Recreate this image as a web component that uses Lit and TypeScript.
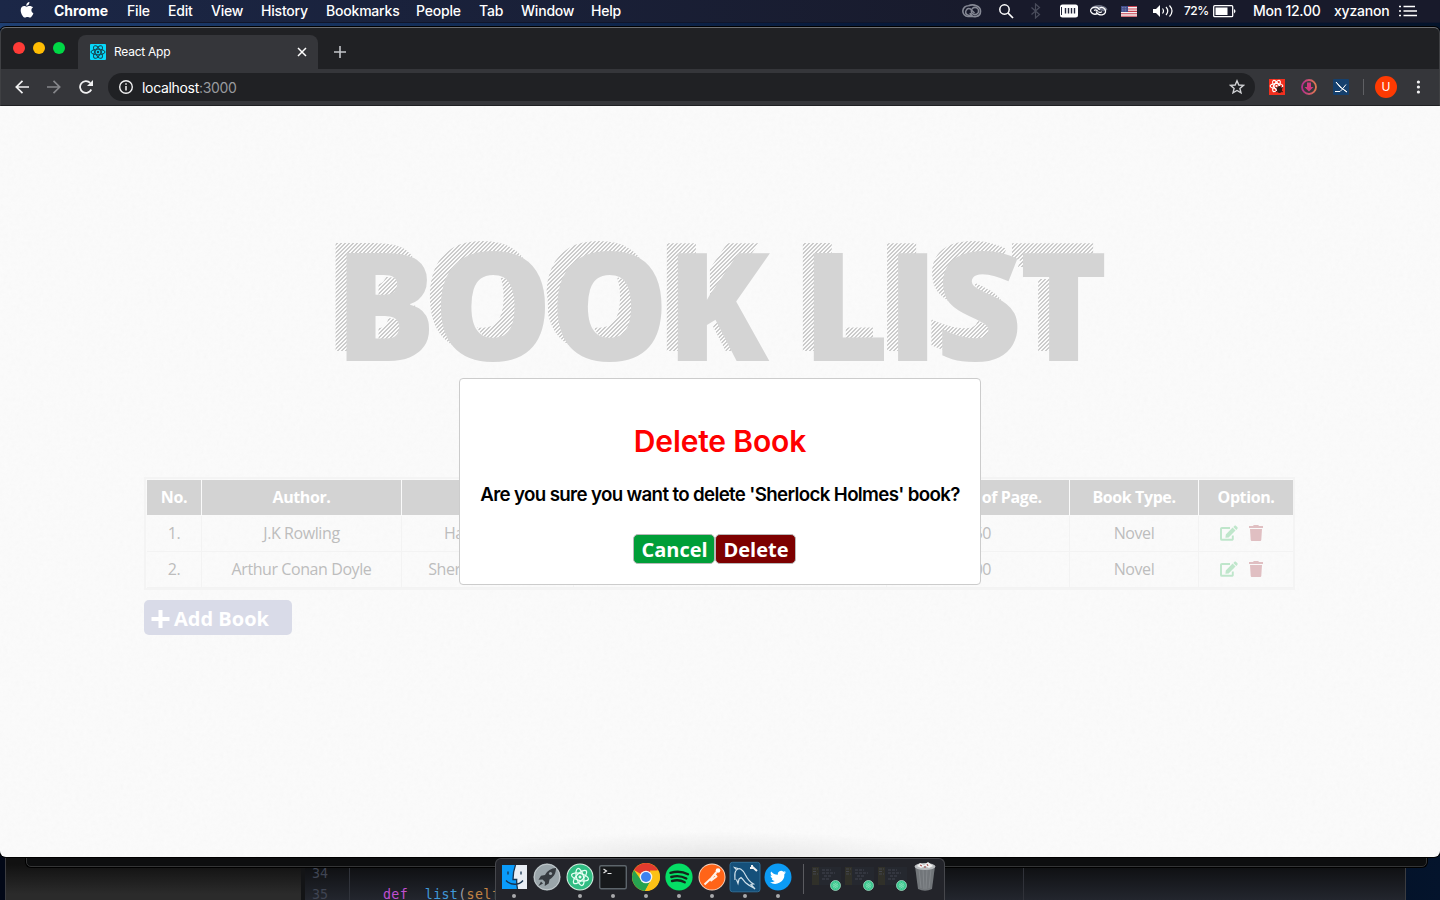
import { LitElement, html, css, svg } from "lit";
import { customElement } from "lit/decorators.js";

const menus = ["Chrome", "File", "Edit", "View", "History", "Bookmarks", "People", "Tab", "Window", "Help"];

const rows = [
  { no: "1.", author: "J.K Rowling", title: "Harry Potter", pages: "350", type: "Novel" },
  { no: "2.", author: "Arthur Conan Doyle", title: "Sherlock Holmes", pages: "300", type: "Novel" },
];

const icon = (w: number, h: number, body: unknown, vb = `0 0 ${w} ${h}`) =>
  html`<svg class="ic" width=${w} height=${h} viewBox=${vb} fill="none">${body}</svg>`;

const atom = (stroke: string, w: number) => svg`
  <g stroke=${stroke} stroke-width=${w} fill="none">
    <ellipse rx="7" ry="2.8"/><ellipse rx="7" ry="2.8" transform="rotate(60)"/><ellipse rx="7" ry="2.8" transform="rotate(120)"/>
  </g><circle r="1.2" fill=${stroke}/>`;

const apple = icon(14, 16, svg`<path fill="#fff" d="M9.4 0c.1 1.1-.3 2-.9 2.700-.6.7-1.500 1.100-2.300 1.100-.1-1 .4-2 .9-2.600C7.700.5 8.700.1 9.400 0zM13 5.500c-1 .6-1.600 1.500-1.600 2.700 0 1.400.8 2.500 2 3-.3 1-.8 1.900-1.400 2.700-.6.8-1.200 1.700-2.200 1.700-.9 0-1.200-.6-2.400-.6-1.100 0-1.500.6-2.400.6S3.400 14.800 2.700 13.900C1.500 12.300.7 10.200.7 8.200.7 5.500 2.400 4.100 4.100 4.100c1 0 1.900.7 2.600.7s1.700-.8 3-.7c1.200 0 2.500.6 3.300 1.400z"/>`);

const edit = icon(18, 16, svg`<path fill="#bfe6cb" d="M12.600 2.600l2.900 2.900-6.900 6.900-3.200.4.400-3.200zM13.300 1.900l1-1c.6-.6 1.300-.6 1.800 0l1.200 1.200c.5.5.5 1.200 0 1.800l-1 1z"/><path d="M10 3H1.900a.9.900 0 0 0-.9.900v10a.9.900 0 0 0 .9.900h10a.9.900 0 0 0 .9-.9V10.500" stroke="#bfe6cb" stroke-width="1.900"/>`);
const trash = icon(14, 16, svg`<path fill="#e0bfc2" d="M0 1h4l.8-1h4.400l.8 1h4v1.900H0zM1 4h12l-.7 10.700c0 .7-.6 1.300-1.400 1.300H3.100c-.8 0-1.400-.6-1.400-1.300z"/>`);

const dockApps = [
  // file manager face
  svg`<rect x="2" y="2" width="25" height="24" fill="#0a9bfa"/><path fill="#e9eef5" d="M15.500 2H27v24H17.500c-.6-3-1-6-.8-9.500h-3.700C13 11 14 6 15.500 2z"/><path d="M15.500 2c-1.500 4-2.500 9-2.500 14.500h3.700c-.2 3.500.2 6.500.8 9.500M8 8.500v3M21 8.500v3M6 17.500c4.500 5 13 5 17 0" stroke="#173451" stroke-width="1.300"/>`,
  // launcher
  svg`<circle cx="14" cy="14" r="13.500" fill="#9aa5aa"/><circle cx="14" cy="14" r="12.800" stroke="#c1c8cb"/><path fill="#363b40" d="M23 5c-5 .3-8.500 2.500-11 7l-4 .8-2.500 4 4-.4 2.600 2.600-.4 4 4-2.500.8-4C21 14 23 10 23 5zM8 18.500L5.500 23l4.500-2.500z"/><circle cx="17.500" cy="10.500" r="1.600" fill="#9aa5aa"/>`,
  // atom editor
  svg`<circle cx="14" cy="14" r="13.500" fill="#d9efe3"/><circle cx="14" cy="14" r="12.500" fill="#31bd83"/><g transform="translate(14 14) rotate(15) scale(1.250)">${atom("#e8fff4", 1)}</g>`,
  // terminal
  svg`<rect x=".7" y="2.700" width="26.600" height="23" rx="1.500" fill="#17191b" stroke="#5d656b" stroke-width="1.400"/><path d="M4.500 6l3 2-3 2M8.500 10.500h4" stroke="#e8e8e8" stroke-width="1.200"/>`,
  // chrome
  svg`<circle cx="14" cy="14" r="14" fill="#fbc116"/><path fill="#e33b2e" d="M14 14L1.900 7A14 14 0 0 1 26.100 7z"/><path fill="#27a350" d="M1.900 7A14 14 0 0 0 13 28l6-11-5-3-6 1.500z"/><path fill="#fbc116" d="M26.100 7.500A14 14 0 0 1 13 28l6-11-1-9.500z"/><circle cx="14" cy="14" r="6.300" fill="#f4f4f4"/><circle cx="14" cy="14" r="5" fill="#3c82f0"/>`,
  // spotify
  svg`<circle cx="14" cy="14" r="13.600" fill="#05de65"/><path d="M5.500 9.800c6-1.800 12.500-1.200 17.500 1.500M6.300 14c5-1.500 10.500-1 15 1.500M7 18c4.500-1.200 9-.8 12.700 1.300" stroke="#14251b" stroke-width="2.400" stroke-linecap="round"/>`,
  // postman
  svg`<circle cx="14" cy="14" r="13.500" fill="#f9d9c6"/><circle cx="14" cy="14" r="12.600" fill="#ff6418"/><circle cx="20" cy="7.500" r="2.300" fill="#fff"/><path d="M18.500 9l-5 6-7 6.500M17 11.500l1.500 2-6 4.500" stroke="#fff0e5" stroke-width="2" stroke-linejoin="round"/>`,
  // workbench
  svg`<rect x="-1" y="-.7" width="30" height="29.500" rx="2.500" fill="#15507a" stroke="#2f6d96"/><path d="M4 17c0-4-1-7 1-9.500 3-4 7-1 9.500 4.500 2 4 4.500 7 8 9l-2.500.5 4 4.500c-3-2-6-3.500-9-6-2-2-3-4-5-5.500l-2 1.500-1 4.500-1.500-4M5 6.500L3.500 4.500 7 5.500" stroke="#cfe0ea" stroke-width="1.200"/><path d="M21 3.500l5 4.500M21 2v3h-2" stroke="#f3f3f3" stroke-width="2"/>`,
  // twitter
  svg`<circle cx="14" cy="14" r="13.500" fill="#0c9bf4"/><path fill="#fff" d="M22 9.300c-.6.300-1.200.4-1.900.5.700-.4 1.200-1 1.400-1.800-.6.400-1.300.6-2.100.8a3.300 3.300 0 0 0-5.600 3c-2.700-.1-5.100-1.400-6.700-3.400-.9 1.500-.4 3.400 1 4.400-.5 0-1-.2-1.500-.4 0 1.600 1.100 2.900 2.600 3.200-.5.100-1 .1-1.500.1.400 1.300 1.600 2.200 3.100 2.300A6.600 6.600 0 0 1 6 19.300a9.300 9.300 0 0 0 14.400-8.300c.6-.5 1.200-1 1.600-1.700z"/>`,
];

@customElement("menu-bar")
export class MenuBar extends LitElement {
  static styles = css`
    :host { display: flex; justify-content: space-between; height: 23px; background: linear-gradient(90deg, #1b2747, #181a2b 70%); color: #fff; font: 500 14px/22px Inter, sans-serif; border-bottom: 1px solid #11162b; box-sizing: border-box; white-space: nowrap; }
    .left { display: grid; grid-template-columns: 34px 73px 41px 43px 50px 65px 90px 63px 42px 70px 40px; padding-left: 20px; letter-spacing: -.2px; }
    .brand { font-weight: 700; letter-spacing: -.02px; }
    .right { display: grid; grid-template-columns: 36px 31px 31px 29px 32px 31px 32px 29px 40px 81px 65px 41px; align-items: center; letter-spacing: -.25px; }
    .pct { font-size: 12px; letter-spacing: -.5px; }
    .user { letter-spacing: -.2px; }
    .ic { display: block; }
    .left .ic { margin-top: 2px; }
  `;
  render() {
    return html`
      <div class="left">${apple}${menus.map((m, i) => html`<span class=${i ? "" : "brand"}>${m}</span>`)}</div>
      <div class="right">
        ${icon(20, 14, svg`<path d="M6.500 1.700A5.400 5.400 0 0 0 6 12.500h8M6.500 1.700c5-2 12 .3 12 5.300a5.400 5.400 0 0 1-10.500 2" stroke="#858894" stroke-width="1.600"/><circle cx="13" cy="7" r="3.600" stroke="#858894" stroke-width="1.600"/><path d="M10 9.500A3.300 3.300 0 1 1 8.500 5l4 4" stroke="#858894" stroke-width="1.500"/>`)}
        ${icon(16, 16, svg`<circle cx="6.500" cy="6.500" r="4.700" stroke="#fff" stroke-width="1.500"/><path d="M10 10l5 5" stroke="#fff" stroke-width="1.700"/>`)}
        ${icon(12, 16, svg`<path d="M2.500 4.500l8 7-4 3.500V1l4 3.500-8 7" stroke="#4a4d5c" stroke-width="1.200"/>`)}
        ${icon(18, 14, svg`<rect y=".5" width="18" height="13" rx="2.500" fill="#fff"/><path d="M5.500 4v5.500M8.500 4v5.500M11.500 4v5.500M14.500 4v5.500" stroke="#22263b" stroke-width="1.400"/><path d="M1.500 3v8" stroke="#22263b"/>`)}
        ${icon(19, 14, svg`<path d="M2 3.500C6-.5 16 0 18.500 5.500l-3.500 2z" fill="#6b6f80"/><path d="M10.500 6.200C9.800 3.500 6.500 2.500 4 3.600S.8 7 2.600 8.800s4.600 1.500 6.200.6M7.200 7.300c.6 2.800 3.800 4.300 6.600 3.300s3.600-3.600 1.900-5.600-4-1.700-5.200-1.100M5 6.500c1.500-1 3-.6 3.700.9M13 7.600c-1.200 1.200-2.700 1-3.700 0" stroke="#fff" stroke-width="1.300"/>`)}
        ${icon(16, 11, svg`<rect width="16" height="11" fill="#f4f0f2"/><path d="M0 .5h16M0 3h16M0 5.400h16M0 7.800h16M0 10.300h16" stroke="#c64050" stroke-width="1.100"/><rect width="7" height="6" fill="#404b88"/><path d="M1 1.500h5M1 3.200h5M1 4.900h5" stroke="#b9bfdc" stroke-width=".6" stroke-dasharray=".7 .9"/>`)}
        ${icon(22, 14, svg`<path fill="#fff" d="M1 5h3l4-4v12L4 9H1z"/><path d="M10.500 4.500q2 2.500 0 5M14 3q3.500 4 0 8M17.500 1.500q5 5.500 0 11" stroke="#fff" stroke-width="1.200"/>`)}
        <span class="pct">72%</span>
        ${icon(24, 13, svg`<rect x=".7" y=".7" width="19" height="11" rx="1" stroke="#fff" stroke-width="1.300"/><rect x="2.500" y="2.500" width="12" height="7.500" fill="#fff"/><path fill="#fff" d="M21 4q3 2.200 0 4.400z"/>`)}
        <span>Mon 12.00</span><span class="user">xyzanon</span>
        ${icon(18, 12, svg`<path d="M4.500 1.500H16M4.500 6H18M4.500 10.500H18" stroke="#fff" stroke-width="1.700"/><path d="M0 1.500h2M0 6h2M0 10.500h2" stroke="#fff" stroke-width="1.700"/>`)}
      </div>`;
  }
}

@customElement("browser-chrome")
export class BrowserChrome extends LitElement {
  static styles = css`
    :host { display: block; height: 79px; box-sizing: border-box; border: 1px solid #6d6f72; border-bottom: 1px solid #1f2023; border-left-color: #3f4043; border-right-color: #3f4043; border-radius: 6px 6px 0 0; background: #202124; color: #fff; font-family: Inter, sans-serif; overflow: hidden; }
    .tabs { display: flex; height: 41px; align-items: flex-end; }
    .lights { display: flex; gap: 8px; padding: 0 13px 15px 12px; }
    .dot { width: 12px; height: 12px; border-radius: 50%; }
    .r { background: #ff3b37; } .y { background: #ffbd03; } .g { background: #00d846; }
    .tab { display: flex; align-items: center; width: 240px; height: 34px; padding: 0 10px 1px 12px; box-sizing: border-box; border-radius: 8px 8px 0 0; background: #35363a; font: 12px Inter, sans-serif; letter-spacing: -.25px; }
    .name { flex: 1; padding-left: 8px; }
    .ic { display: block; flex: none; }
    .plus { padding: 0 0 11px 16px; }
    .bar { display: flex; align-items: center; height: 36px; background: #35363a; padding: 0 14px; box-sizing: border-box; }
    .nav { display: flex; gap: 18px; padding-right: 15px; }
    .omni { display: flex; align-items: center; flex: none; box-sizing: border-box; width: 1147px; height: 28px; border-radius: 14px; background: #202124; padding: 0 10px 0 10px; font: 14px Inter, sans-serif; letter-spacing: -.32px; }
    .url { flex: 1; padding: 0 0 0 8px; } .port { color: #989a9e; }
    .ext { display: flex; gap: 16px; padding-left: 14px; }
    .sep { width: 1px; height: 16px; margin: 0 11px 0 14px; background: #5f6064; }
    .avatar { width: 22px; height: 22px; border-radius: 50%; background: #fe3a02; font: 12px/22px Inter, sans-serif; text-align: center; margin-right: 19px; }
  `;
  render() {
    return html`
      <div class="tabs">
        <div class="lights"><i class="dot r"></i><i class="dot y"></i><i class="dot g"></i></div>
        <div class="tab">
          ${icon(16, 16, svg`<rect width="16" height="16" rx="1" fill="#07d8fb"/><g transform="translate(8 8)">${atom("#15434e", 1)}</g>`)}
          <span class="name">React App</span>
          ${icon(12, 12, svg`<path d="M2 2l8 8M10 2l-8 8" stroke="#fff" stroke-width="1.500"/>`)}
        </div>
        <div class="plus">${icon(12, 12, svg`<path d="M6 0v12M0 6h12" stroke="#c3c6ca" stroke-width="1.600"/>`)}</div>
      </div>
      <div class="bar">
        <div class="nav">
          ${icon(14, 14, svg`<path d="M14 7H1.500M7.500 .8L1.300 7l6.200 6.200" stroke="#f1f1f2" stroke-width="1.700"/>`)}
          ${icon(14, 14, svg`<path d="M0 7h12.500M6.500.8L12.700 7l-6.200 6.200" stroke="#85868a" stroke-width="1.700"/>`)}
          ${icon(14, 14, svg`<path d="M12.300 9.500A5.900 5.900 0 1 1 11.200 2.800" stroke="#f1f1f2" stroke-width="1.800"/><path d="M14 0v6H8z" fill="#f1f1f2"/>`)}
        </div>
        <div class="omni">
          ${icon(16, 16, svg`<circle cx="8" cy="8" r="6.300" stroke="#f1f1f2" stroke-width="1.400"/><path d="M8 7v4.500M8 4.300v1.500" stroke="#f1f1f2" stroke-width="1.500"/>`)}
          <span class="url">localhost<span class="port">:3000</span></span>
          ${icon(16, 16, svg`<path d="M8 1.800l1.800 4.200 4.600.4-3.500 3 1.100 4.500-4-2.400-4 2.400 1.100-4.500-3.500-3 4.600-.4z" stroke="#d0d1d4" stroke-width="1.400"/>`)}
        </div>
        <div class="ext">
          ${icon(16, 16, svg`<rect width="16" height="16" fill="#f22f1e"/><g transform="translate(7.500 7) scale(.9)">${atom("#fff", 1.300)}</g><ellipse cx="10.500" cy="10.500" rx="2.600" ry="3.500" fill="#301916"/><path d="M6.500 8.500l7.500 4.500M14 8.500l-7 4.500" stroke="#301916"/>`)}
          ${icon(16, 16, svg`<defs><linearGradient id="dl"><stop stop-color="#b32d8c"/><stop offset="1" stop-color="#e07a50"/></linearGradient></defs><circle cx="8" cy="8" r="7" stroke="url(#dl)" stroke-width="1.800"/><path fill="#d0397f" d="M6 3.500h4V8h2.500L8 12.500 3.500 8H6z"/>`)}
          ${icon(16, 16, svg`<rect width="16" height="16" rx="1" fill="#15406d"/><path d="M3 3l4 5 7 5-5-3.500z" fill="#fff" stroke="#fff" stroke-width="1"/><path d="M2 12.500h5l2-2 4-5" stroke="#fff" stroke-width="1"/>`)}
        </div>
        <i class="sep"></i><div class="avatar">U</div>
        ${icon(4, 14, svg`<circle cx="2.400" cy="2" r="1.600" fill="#f1f1f2"/><circle cx="2.400" cy="7" r="1.600" fill="#f1f1f2"/><circle cx="2.400" cy="12" r="1.600" fill="#f1f1f2"/>`)}
      </div>`;
  }
}

@customElement("book-page")
export class BookPage extends LitElement {
  static styles = css`
    :host { display: block; position: relative; height: 751px; box-sizing: border-box; background: #fbfbfb; border-radius: 0 0 6px 6px; overflow: hidden; padding: 95px 144px 0; }
    .grain { position: absolute; inset: 0; width: 100%; height: 100%; opacity: .035; }
    .title { position: relative; height: 276px; box-sizing: border-box; text-align: center; font: 800 150px/204px "Open Sans", sans-serif; letter-spacing: -3px; color: #d4d4d4; white-space: nowrap; }
    .front { position: relative; text-shadow: 3px 2px 0 #fafafa; }
    .title::before { content: "BOOK LIST"; position: absolute; left: -11px; top: -10px; width: 100%; color: transparent; background: repeating-linear-gradient(135deg, #cbcbcb 0 1.400px, #fbfbfb 1.400px 2.828px); -webkit-background-clip: text; background-clip: text; }
    .table { position: relative; display: grid; grid-template-columns: 55px 200px 172px 313px 183px 129px 94px; width: 1151px; box-sizing: border-box; border: 2px solid #f4f4f4; padding: 1px 1px 0; font: 16px/35px "Open Sans", sans-serif; color: #bdbdbd; text-align: center; }
    .cell { height: 36px; box-sizing: border-box; border-right: 1px solid #f3f3f3; border-bottom: 1px solid #f3f3f3; white-space: nowrap; letter-spacing: -.42px; }
    .cell:nth-child(7n) { border-right: 0; }
    .head { background: #d3d3d3; background-clip: padding-box; color: #fff; font-weight: 700; border-right-color: #fafafa; border-bottom-color: #fafafa; letter-spacing: -.4px; }
    .icons { display: flex; align-items: center; justify-content: center; gap: 11px; padding: 0 10px 1px 0; }
    .ic { display: block; }
    .add { position: relative; display: flex; align-items: center; gap: 4px; margin-top: 10px; width: 148px; height: 35px; padding: 3px 0 0 7px; box-sizing: border-box; border-radius: 5px; background: #d9dbe8; color: #fff; font: 700 20px/34px "Open Sans", sans-serif; }
    .modal { position: absolute; left: 459px; top: 272px; width: 522px; height: 207px; box-sizing: border-box; border: 1px solid #ccc; border-radius: 4px; background: #fff; display: flex; flex-direction: column; align-items: center; padding-top: 42px; white-space: nowrap; }
    .h { margin: 0; font: 600 30px/40px Inter, sans-serif; color: #f00; letter-spacing: -.15px; }
    .q { margin: 19px 0 0; font: 600 18.720px/30px Inter, sans-serif; color: #000; letter-spacing: -.65px; }
    .btns { display: flex; margin: 24px 11px 0 0; }
    .btn { height: 30px; box-sizing: border-box; border: 1px solid #b9b9b9; border-radius: 5px; padding: 1px 0 0 1px; font: 700 20px/28px "Open Sans", sans-serif; color: #fff; text-align: center; }
    .cancel { width: 82px; background: #009e38; } .del { width: 81px; background: #7d0000; }
    .glow { position: absolute; left: 480px; right: 480px; bottom: 0; height: 26px; background: radial-gradient(ellipse at 50% 100%, rgba(0,0,0,.08), transparent 70%); }
  `;
  render() {
    const cell = (v: unknown) => html`<div class="cell">${v}</div>`;
    return html`
      <svg class="grain"><filter id="n"><feTurbulence type="fractalNoise" baseFrequency=".25" numOctaves="3"/><feColorMatrix type="saturate" values="0"/></filter><rect width="100%" height="100%" filter="url(#n)"/></svg>
      <div class="title"><div class="front">BOOK LIST</div></div>
      <div class="table">
        ${["No.", "Author.", "", "", "Number of Page.", "Book Type.", "Option."].map((h) => html`<div class="cell head">${h}</div>`)}
        ${rows.map((r) => html`${cell(r.no)}${cell(r.author)}${cell(r.title)}${cell("")}${cell(r.pages)}${cell(r.type)}<div class="cell icons">${edit}${trash}</div>`)}
      </div>
      <div class="add">${icon(19, 18, svg`<path d="M9.500 0v18M.5 9h18" stroke="#fff" stroke-width="4"/>`)}<span>Add Book</span></div>
      <div class="glow"></div>
      <div class="modal">
        <h2 class="h">Delete Book</h2>
        <p class="q">Are you sure you want to delete 'Sherlock Holmes' book?</p>
        <div class="btns"><button class="btn cancel">Cancel</button><button class="btn del">Delete</button></div>
      </div>`;
  }
}

@customElement("app-dock")
export class AppDock extends LitElement {
  static styles = css`
    :host { display: flex; height: 42px; width: 450px; box-sizing: border-box; padding: 4px 0 0 1px; background: #23242a; border: 1px solid #46474c; border-bottom: 0; border-radius: 6px 6px 0 0; }
    .app { width: 33px; flex: none; display: flex; flex-direction: column; align-items: center; gap: 2px; }
    .ic { display: block; overflow: visible; }
    .run { width: 4px; height: 4px; border-radius: 50%; background: #a8a9ac; margin-top: 1px; }
    .off { visibility: hidden; }
    .sep { width: 1px; height: 30px; background: #5a5b60; margin: 1px 6px 0 9px; }
    .bin { width: 31px; margin-top: -1px; }
  `;
  render() {
    const mini = icon(30, 28, svg`<rect x="0" y="4" width="29" height="18" fill="#25282f"/><rect y="4" width="7" height="18" fill="#303029"/><path d="M1 6h5M1 8.500h4M1 11h5M10 7h9M10 10h13M12 13h8M10 16h7" stroke="#4a4d58" stroke-width=".8" stroke-dasharray="3 1"/><circle cx="23.500" cy="22.500" r="5" fill="#36c58c" stroke="#b5ead2" stroke-width=".7"/><g transform="translate(23.500 22.500) scale(.45)">${atom("#8fe3bd", 1)}</g>`);
    return html`
      ${dockApps.map((a, i) => html`<div class="app">${icon(28, 28, a)}<i class="run ${i === 1 ? "off" : ""}"></i></div>`)}
      <i class="sep"></i>
      ${[0, 1, 2].map(() => html`<div class="app">${mini}</div>`)}
      <div class="app bin">${icon(24, 30, svg`<path d="M2 4h20l-3 23q-7 3.500-14 0z" fill="#72767a"/><path d="M6 7l2 19M10 7l1 20M14 7l-1 20M18 7l-2 19" stroke="#868a8e" stroke-width=".8"/><ellipse cx="12" cy="4.500" rx="10.500" ry="3.500" fill="#b9bcbf"/><path d="M4 4l3-3 4 2 4-3 5 4-4 2-4-2-4 2z" fill="#f0f0f0"/><path d="M7 3l2 1M14 2l1 2M11 5h2" stroke="#a14242"/>`)}</div>`;
  }
}

@customElement("app-root")
export class AppRoot extends LitElement {
  static styles = css`
    :host { display: block; position: relative; width: 1440px; height: 900px; overflow: hidden; background: linear-gradient(90deg, #1e3f73, #071a3b 60%, #04142b); }
    .window { margin-top: 4px; position: relative; box-shadow: 0 0 0 1px #000; border-radius: 6px; }
    .behind { position: absolute; left: 0; right: 0; top: 840px; height: 60px; background: linear-gradient(90deg, #020817 70%, #04142c); }
    .editor { position: absolute; left: 5px; top: 0; width: 1401px; height: 60px; box-sizing: border-box; border: 1px solid #3b3c40; border-width: 0 1px; display: flex; background: linear-gradient(#0d0e10 40%, #23262e); }
    .side { width: 295px; background: linear-gradient(#111 40%, #2b2b2b 90%); border-right: 4px solid #131416; }
    .code { display: grid; grid-template-columns: 44px 1fr; grid-template-rows: 21px 15px; padding-top: 24px; font: 13.300px/20px "DejaVu Sans Mono", monospace; white-space: pre; flex: 1; }
    .num { color: #3f4452; padding-left: 7px; } .line { border-left: 1px solid #30333b; padding-left: 33px; letter-spacing: .35px; }
    .kw { color: #c04fd0; } .fn { color: #4098d8; } .arg { color: #c28344; } .par { color: #9a9da5; }
    .guide { width: 381px; border-left: 1px solid #303239; }
    .terminal { position: absolute; left: 26px; top: 0; width: 1401px; height: 27px; box-sizing: border-box; border: 1px solid #343536; border-radius: 0 0 5px 5px; background: #0d0e0f; box-shadow: 0 0 0 1px #000; }
    .dock { position: absolute; left: 495px; top: 858px; }
  `;
  render() {
    return html`
      <menu-bar></menu-bar>
      <div class="behind">
        <div class="editor">
          <div class="side"></div>
          <div class="code"><span class="num">34</span><span class="line"></span><span class="num">35</span><span class="line"><span class="kw">def</span>  <span class="fn">list</span><span class="par">(</span><span class="arg">self</span></span></div>
          <div class="guide"></div>
        </div>
        <div class="terminal"></div>
      </div>
      <div class="window"><browser-chrome></browser-chrome><book-page></book-page></div>
      <app-dock class="dock"></app-dock>`;
  }
}
